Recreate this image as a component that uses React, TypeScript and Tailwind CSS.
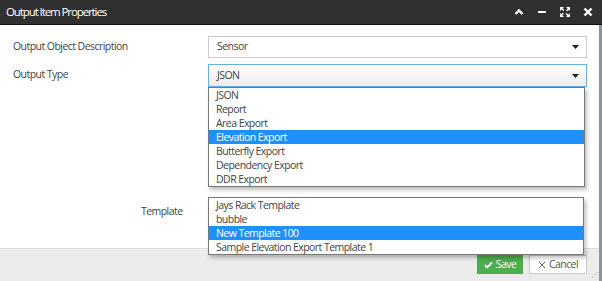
import React from "react";

const outputTypes = [
	"JSON",
	"Report",
	"Area Export",
	"Elevation Export",
	"Butterfly Export",
	"Dependency Export",
	"DDR Export",
];

const templates = [
	"Jays Rack Template",
	"bubble",
	"New Template 100",
	"Sample Elevation Export Template 1",
];

function Caret() {
	return (
		<svg width="7" height="4" viewBox="0 0 7 4" className="shrink-0">
			<path d="M0 0h7L3.5 4z" fill="#222" />
		</svg>
	);
}

function ListBox({ items, selected }: { items: string[]; selected: string }) {
	return (
		<div className="border border-[#777] bg-white shadow-[2px_3px_4px_rgba(0,0,0,0.25)]">
			{items.map((item) => (
				<div
					key={item}
					className={
						item === selected
							? "h-[14px] bg-[#1e90ff] pl-[7px] leading-[14px] text-white"
							: "h-[14px] pl-[7px] leading-[14px] text-[#444]"
					}
				>
					{item}
				</div>
			))}
		</div>
	);
}

export default function App() {
	return (
		<div
			className="relative flex h-[281px] w-[602px] flex-col overflow-hidden bg-white text-[10.5px] tracking-[-0.55px] text-[#444]"
			style={{ fontFamily: '"Open Sans", "Liberation Sans", sans-serif' }}
		>
			{/* header */}
			<div className="flex h-[25px] shrink-0 items-center border-b border-[#111] bg-[#303030] pl-[6px] pr-[8px] text-white">
				<span className="text-[11.5px] tracking-[-1.1px]">Output Item Properties</span>
				<div className="ml-auto flex items-center gap-[11px]">
					<svg width="12" height="12" viewBox="0 0 12 12">
						<path d="M2.5 8L6 4.5 9.5 8" stroke="#fff" strokeWidth="2.4" fill="none" />
					</svg>
					<svg width="12" height="12" viewBox="0 0 12 12">
						<rect x="2" y="5" width="8" height="2" fill="#fff" />
					</svg>
					<svg width="12" height="12" viewBox="0 0 12 12">
						<path
							d="M1 1h4l-1.3 1.3 1.6 1.6-1 1-1.6-1.6L1 5zM11 1v4L9.7 3.7 8.1 5.3l-1-1 1.6-1.6L7 1zM1 11V7l1.3 1.3 1.6-1.6 1 1-1.6 1.6L5 11zM11 11H7l1.3-1.3-1.6-1.6 1-1 1.6 1.6L11 7z"
							fill="#fff"
						/>
					</svg>
					<svg width="12" height="12" viewBox="0 0 12 12">
						<path d="M2.5 2.5l7 7M9.5 2.5l-7 7" stroke="#fff" strokeWidth="2.4" />
					</svg>
				</div>
			</div>

			<div className="flex flex-1">
				<div className="relative flex flex-1 flex-col">
					{/* body */}
					<div className="flex h-[225px] shrink-0 flex-col pl-[13px] pr-[12px] pt-[11px]">
						<div className="flex items-center">
							<div className="w-[195px]">Output Object Description</div>
							<div className="flex h-[22px] flex-1 items-center border border-[#ccc] pl-[8px] pr-[7px]">
								<span className="flex-1">Sensor</span>
								<Caret />
							</div>
						</div>
						<div className="mt-[6px] flex items-start">
							<div className="w-[195px] pt-[3px]">Output Type</div>
							<div className="flex flex-1 flex-col pr-[2px]">
								<div className="-mr-[2px] flex h-[23px] items-center border border-[#66afe9] bg-gradient-to-b from-white to-[#ececec] pl-[8px] pr-[7px]">
									<span className="flex-1">JSON</span>
									<Caret />
								</div>
								<ListBox items={outputTypes} selected="Elevation Export" />
							</div>
						</div>
						<div className="mt-[10px] flex items-start">
							<div className="w-[195px] pl-[128px] pt-[7px]">Template</div>
							<div className="relative z-10 flex-1 pr-[3px]">
								<ListBox items={templates} selected="New Template 100" />
							</div>
						</div>
					</div>

					{/* footer */}
					<div className="-mt-[2px] flex flex-1 items-start justify-end gap-[6px] border-t border-[#ddd] bg-[#ececec] pr-[12px] pt-[6px]">
						<button className="flex h-[19px] w-[46px] shrink-0 items-center justify-center gap-[3px] bg-[#4cae4c] text-white">
							<svg width="9" height="8" viewBox="0 0 9 8">
								<path d="M1 4.2l2.2 2.2L8 1.4" stroke="#fff" strokeWidth="1.8" fill="none" />
							</svg>
							Save
						</button>
						<button className="flex h-[19px] w-[58px] shrink-0 items-center justify-center gap-[3px] border border-[#ccc] bg-white text-[#555]">
							<svg width="8" height="8" viewBox="0 0 8 8">
								<path d="M1 1l6 6M7 1L1 7" stroke="#666" strokeWidth="1" />
							</svg>
							Cancel
						</button>
					</div>
					<div className="absolute bottom-[3px] right-[1px] text-[8px] leading-none tracking-[-1px] text-[#999]">
						⋰
					</div>
				</div>
				<div className="w-[3px] shrink-0 bg-[#8b939c]" />
			</div>
		</div>
	);
}
